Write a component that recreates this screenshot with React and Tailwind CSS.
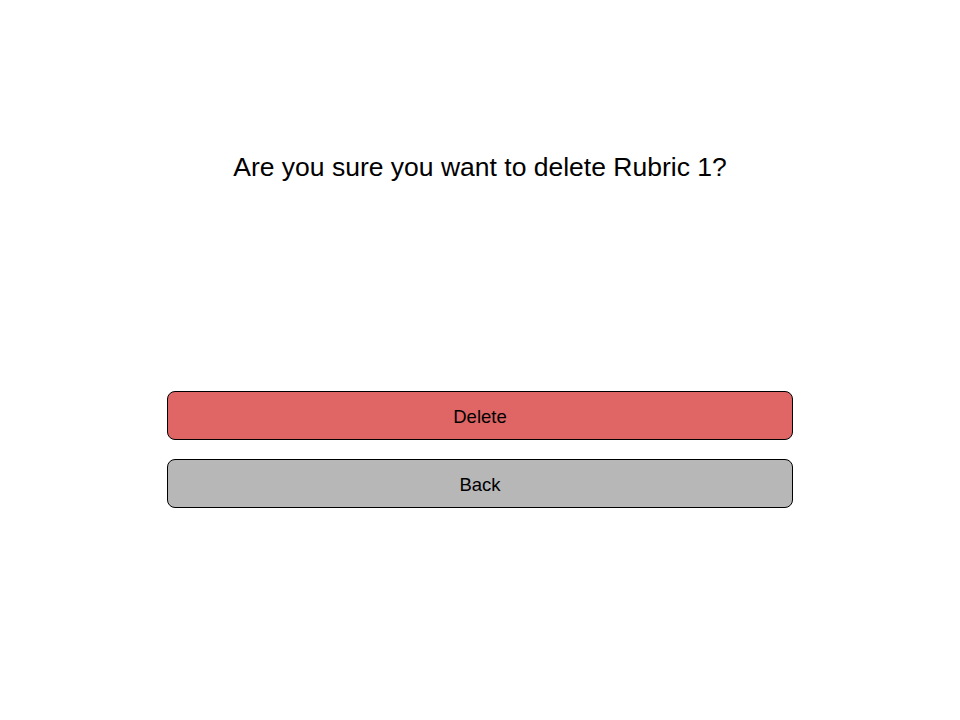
export default function App() {
  return (
    <div className="w-[960px] h-[720px] bg-white flex flex-col items-center font-['Liberation_Sans',Arial,sans-serif] text-black">
      <h1 className="mt-[151px] text-[26.5px] leading-[32px]">Are you sure you want to delete Rubric 1?</h1>
      <div className="mt-[208px] w-[626px] flex flex-col gap-[19px]">
        <button className="h-[49px] w-full rounded-[8px] border border-black bg-[#e06666] text-[18.5px] pt-[2px]">
          Delete
        </button>
        <button className="h-[49px] w-full rounded-[8px] border border-black bg-[#b7b7b7] text-[18.5px] pt-[2px]">
          Back
        </button>
      </div>
    </div>
  );
}
